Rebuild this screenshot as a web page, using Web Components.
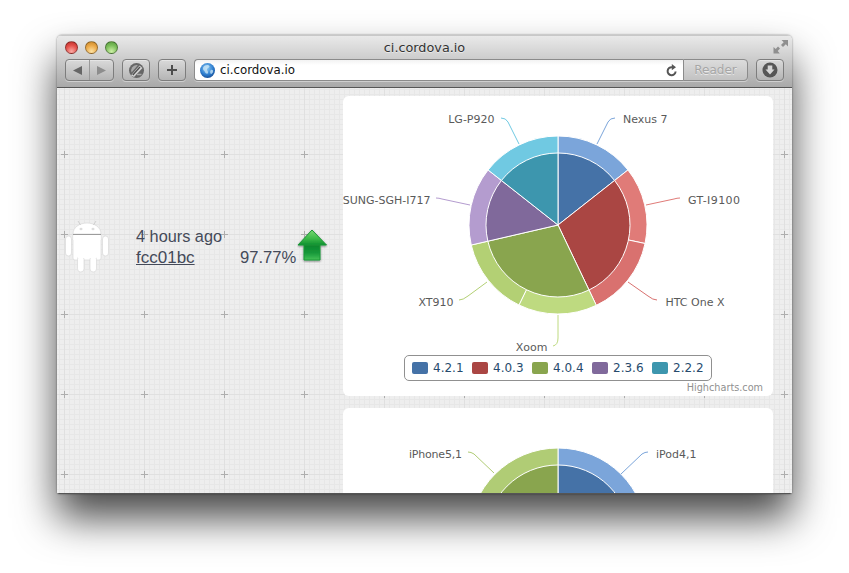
<!DOCTYPE html>
<html>
<head>
<meta charset="utf-8">
<title>ci.cordova.io</title>
<style>
  html, body { margin: 0; padding: 0; background: #fff; }
  body { width: 849px; height: 573px; overflow: hidden; }
</style>
</head>
<body>
<mac-window title-text="ci.cordova.io" url="ci.cordova.io">
  <grid-sheet>
    <build-row time="4 hours ago" commit="fcc01bc" percent="97.77%">
      <pie-chart chart="android"></pie-chart>
    </build-row>
    <build-row>
      <pie-chart chart="ios"></pie-chart>
    </build-row>
  </grid-sheet>
</mac-window>

<script>
const CHARTS = {
  android: {
    cy: 225,
    inner: [
      ['#4572A7', 0, 51.8], ['#AA4643', 51.8, 154.5], ['#89A54E', 154.5, 257],
      ['#80699B', 257, 308.2], ['#3D96AE', 308.2, 360],
    ],
    outer: [
      ['#7BA5DA', 0, 51.8], ['#E07B78', 51.8, 102], ['#D9716F', 102, 154.5], ['#BEDA80', 154.5, 206],
      ['#B3D074', 206, 257], ['#B49CCF', 257, 308.2], ['#70C9E2', 308.2, 360],
    ],
    labels: [
      ['Nexus 7', 623, 123, 'start', '#7BA5DA', 'M597 144L608 122Q610 118 615 118'],
      ['GT-I9100', 688, 204, 'start', '#E07B78', 'M646 205L674 199Q677 198 680 198', 52],
      ['HTC One X', 665.5, 306, 'start', '#D9716F', 'M628 282L648 296Q653 300 657 300'],
      ['Xoom', 547.5, 351, 'end', '#BEDA80', 'M558 315L558 338Q558 345 553 346'],
      ['XT910', 453.5, 306, 'end', '#B3D074', 'M487 282L468 296Q463 300 459 300'],
      ['SAMSUNG-SGH-I717', 430.5, 204, 'end', '#B49CCF', 'M470 205L442 199Q439 198 436 198'],
      ['LG-P920', 494.5, 123, 'end', '#70C9E2', 'M519 144L508 122Q506 118 501 118'],
    ],
    legend: [
      ['#4572A7', '4.2.1'], ['#AA4643', '4.0.3'], ['#89A54E', '4.0.4'], ['#80699B', '2.3.6'], ['#3D96AE', '2.2.2'],
    ],
  },
  ios: {
    cy: 537,
    inner: [['#4572A7', 0, 90], ['#89A54E', 270, 360]],
    outer: [['#7BA5DA', 0, 90], ['#B0CC75', 270, 360]],
    labels: [
      ['iPod4,1', 656, 458, 'start', '#7BA5DA', 'M621 474L642 454Q645 452 648 452'],
      ['iPhone5,1', 462, 458, 'end', '#B0CC75', 'M494 473L474 454Q471 452 468 452', 53],
    ],
    legend: [],
  },
};

function slicePath(cx, cy, r, from, to) {
  const rad = (deg) => (deg * Math.PI) / 180;
  const x1 = cx + r * Math.sin(rad(from));
  const y1 = cy - r * Math.cos(rad(from));
  const x2 = cx + r * Math.sin(rad(to));
  const y2 = cy - r * Math.cos(rad(to));
  const large = to - from > 180 ? 1 : 0;
  return `M${cx} ${cy}L${x1.toFixed(2)} ${y1.toFixed(2)}A${r} ${r} 0 ${large} 1 ${x2.toFixed(2)} ${y2.toFixed(2)}Z`;
}

class MacWindow extends HTMLElement {
  constructor() {
    super();
    this.attachShadow({ mode: 'open' });
  }

  connectedCallback() {
    this.shadowRoot.innerHTML = `
      <style>
        :host {
          display: block;
          width: 735px;
          height: 459px;
          margin: 35px 0 0 57px;
          border-radius: 5px 5px 2px 2px;
          box-shadow: 0 24px 40px rgba(0, 0, 0, 0.72), 0 0 2px rgba(0, 0, 0, 0.5);
        }
        .frame {
          height: 100%;
          display: flex;
          flex-direction: column;
          overflow: hidden;
          border-radius: inherit;
        }
        .content { flex: 1; min-height: 0; overflow: hidden; border-bottom: 1px solid #555; }
      </style>
      <div class="frame">
        <window-toolbar title-text="${this.getAttribute('title-text')}" url="${this.getAttribute('url')}"></window-toolbar>
        <div class="content"><slot></slot></div>
      </div>
    `;
  }
}

class WindowToolbar extends HTMLElement {
  constructor() {
    super();
    this.attachShadow({ mode: 'open' });
  }

  connectedCallback() {
    this.shadowRoot.innerHTML = `
      <style>
        :host {
          display: block;
          height: 53px;
          box-sizing: border-box;
          background: linear-gradient(#e9e9e9 0, #d6d6d6 30%, #a9a9a9 100%);
          border-top: 1px solid #c8c8c8;
          border-bottom: 1px solid #565656;
          font-family: "DejaVu Sans", sans-serif;
          color: #333;
        }
        .top { height: 23px; display: flex; align-items: center; position: relative; }
        .lights { display: flex; gap: 7px; padding-left: 8px; }
        .light {
          width: 13px;
          height: 13px;
          border-radius: 50%;
          box-sizing: border-box;
          border: 1px solid rgba(0, 0, 0, 0.35);
        }
        .red { background: radial-gradient(circle at 50% 85%, #fbaaa4 0, #e4504a 55%, #b92a25 100%); }
        .amber { background: radial-gradient(circle at 50% 85%, #fde2a2 0, #eba948 55%, #c58426 100%); }
        .green { background: radial-gradient(circle at 50% 85%, #cdf0a6 0, #7dbf5c 55%, #55983b 100%); }
        .title {
          position: absolute;
          left: 0;
          right: 0;
          top: 3px;
          text-align: center;
          font-size: 12.8px;
          line-height: 17px;
          text-shadow: 0 1px 0 rgba(255, 255, 255, 0.5);
        }
        .resize { position: absolute; right: 4px; top: 3px; }
        .tools { display: flex; align-items: stretch; height: 22px; padding: 0 8px; }
        .btn {
          box-sizing: border-box;
          height: 22px;
          border: 1px solid #7d7d7d;
          border-radius: 4px;
          background: linear-gradient(#d9d9d9, #b5b5b5);
          box-shadow: 0 1px 0 rgba(255, 255, 255, 0.4), inset 0 1px 0 rgba(255, 255, 255, 0.35);
          display: flex;
          align-items: center;
          justify-content: center;
        }
        .nav { width: 49px; margin-right: 8px; }
        .nav span { flex: 1; display: flex; justify-content: center; height: 100%; align-items: center; }
        .nav span + span { border-left: 1px solid #999; }
        .square { width: 28px; margin-right: 8px; }
        .address {
          width: 489px;
          box-sizing: border-box;
          border: 1px solid #8b8b8b;
          border-right: 0;
          border-radius: 4px 0 0 4px;
          background: linear-gradient(#f2f2f2 0, #fff 25%);
          box-shadow: 0 1px 0 rgba(255, 255, 255, 0.4);
          display: flex;
          align-items: center;
          padding: 0 5px 0 5px;
          font-size: 11.8px;
          color: #111;
        }
        .address .url { flex: 1; margin-left: 5px; }
        .reader {
          box-sizing: border-box;
          width: 65px;
          margin-right: 8px;
          border: 1px solid #8b8b8b;
          border-radius: 0 4px 4px 0;
          background: linear-gradient(#dcdcdc, #c2c2c2);
          box-shadow: 0 1px 0 rgba(255, 255, 255, 0.4);
          text-align: center;
          font-size: 12px;
          line-height: 20px;
          color: #a6a6a6;
          text-shadow: 0 1px 0 rgba(255, 255, 255, 0.6);
        }
        .square:last-child { margin-right: 0; }
      </style>
      <div class="top">
        <div class="lights">
          <div class="light red"></div><div class="light amber"></div><div class="light green"></div>
        </div>
        <div class="title">${this.getAttribute('title-text')}</div>
        <svg class="resize" width="15" height="15" viewBox="0 0 15 15">
          <path d="M8.5 1H15V7.5L12.8 5.3L10 8L8 6L10.7 3.2ZM0.5 8L2.7 10L5 7.5L7 9.5L4.7 12L6.8 14.5H0.5Z" fill="#8f8f8f"/>
        </svg>
      </div>
      <div class="tools">
        <div class="btn nav">
          <span><svg width="11" height="11" viewBox="0 0 11 11"><path d="M1 5.5L10 1V10Z" fill="#666"/></svg></span>
          <span><svg width="11" height="11" viewBox="0 0 11 11"><path d="M10 5.5L1 1V10Z" fill="#8d8d8d"/></svg></span>
        </div>
        <div class="btn square">
          <svg width="17" height="17" viewBox="0 0 17 17">
            <path d="M8.5 1A7.500 7.500 0 1 0 8.500 16A7.500 7.500 0 1 0 8.500 1Z" fill="#666"/>
            <path d="M8.500 3A5.500 5.500 0 0 0 3.500 10.500L9.800 3.200A5.500 5.500 0 0 0 8.500 3Z" fill="#a8a8a8"/>
            <path d="M3 13.500L11.500 3.500L14.500 6L6 15Z" fill="#d2d2d2"/>
            <path d="M4.800 13L12 5" stroke="#4d4d4d" stroke-width="1.300"/>
            <path d="M9 12.500H13.500" stroke="#a8a8a8" stroke-width="1.500"/>
          </svg>
        </div>
        <div class="btn square">
          <svg width="12" height="12" viewBox="0 0 12 12"><path d="M5 1H7V5H11V7H7V11H5V7H1V5H5Z" fill="#4d4d4d"/></svg>
        </div>
        <div class="address">
          <svg width="15" height="15" viewBox="0 0 15 15">
            <defs>
              <radialGradient id="globe" cx="45%" cy="35%" r="70%">
                <stop offset="0" stop-color="#8fcdf5"/><stop offset="0.6" stop-color="#2f7fd0"/><stop offset="1" stop-color="#13478f"/>
              </radialGradient>
            </defs>
            <circle cx="7.5" cy="7.5" r="7.5" fill="url(#globe)"/>
            <path d="M5 2.5C7 1.5 9.5 2 9.5 3.5C9.5 5 7.5 4.5 7 6C6.5 7.5 8.5 8 8 10C7.5 11.5 5.5 10.5 5 9C4.5 7.5 2.5 7 3 5C3.3 4 4 3 5 2.5ZM11 7C12.5 6.5 13.5 7.5 13 9C12.5 10.5 11 11.5 10.5 10.5C10 9.5 10 7.5 11 7Z" fill="#cfe8f7" opacity="0.75"/>
          </svg>
          <span class="url">${this.getAttribute('url')}</span>
          <svg width="12" height="13" viewBox="0 0 12 13">
            <path d="M9.6 7.5A4 4 0 1 1 6 3.2" fill="none" stroke="#555" stroke-width="2"/>
            <path d="M5.8 0L10 3.2L5.8 6.2Z" fill="#555"/>
          </svg>
        </div>
        <div class="reader">Reader</div>
        <div class="btn square">
          <svg width="16" height="16" viewBox="0 0 16 16">
            <circle cx="8" cy="8" r="7.5" fill="#565656"/>
            <path d="M5.7 3.5H10.3V7.5H12.5L8 12.5L3.5 7.5H5.7Z" fill="#d6d6d6"/>
          </svg>
        </div>
      </div>
    `;
  }
}

class GridSheet extends HTMLElement {
  constructor() {
    super();
    this.attachShadow({ mode: 'open' });
  }

  connectedCallback() {
    let minor = '';
    for (let i = 0; i < 16; i += 1) {
      minor += `M${2.5 + i * 5} 0V80M0 ${1.5 + i * 5}H80`;
    }
    const tile = `<svg xmlns='http://www.w3.org/2000/svg' width='80' height='80'>`
      + `<path d='${minor}' stroke='#e7e7e7' fill='none'/>`
      + `<path d='M7.5 0V80M0 66.5H80' stroke='#e0e0e0' fill='none'/>`
      + `<path d='M4 66.5H11M7.5 63V70' stroke='#adadad' fill='none'/></svg>`;
    const tileUrl = `url("data:image/svg+xml,${encodeURIComponent(tile)}")`;
    this.shadowRoot.innerHTML = `
      <style>
        :host {
          display: flex;
          flex-direction: column;
          gap: 12px;
          padding-top: 8px;
          background-color: #eeeeee;
          background-image: ${tileUrl};
        }
      </style>
      <slot></slot>
    `;
  }
}

class BuildRow extends HTMLElement {
  constructor() {
    super();
    this.attachShadow({ mode: 'open' });
  }

  connectedCallback() {
    const time = this.getAttribute('time');
    const info = !time ? '' : `
      <svg class="droid" width="45" height="54" viewBox="65 219 45 54">
        <g fill="#fff" stroke="#d4d4d4" stroke-width="0.6">
          <path d="M73 234C73 227 80 223 87 223C94 223 101 227 101 234Z"/>
          <path d="M73 235H101V258Q101 260 99 260H75Q73 260 73 258Z"/>
          <rect x="65.5" y="236" width="6" height="20" rx="3"/>
          <rect x="102.5" y="236" width="6" height="20" rx="3"/>
          <rect x="77.5" y="256" width="6.5" height="16" rx="3.2"/>
          <rect x="90" y="256" width="6.5" height="16" rx="3.2"/>
          <path d="M73.3 235H100.7V240H73.3Z" stroke="none"/>
          <path d="M78 255H84V258H78ZM90 255H96.500V258H90Z" stroke="none"/>
        </g>
        <path d="M78 221L80.5 225M96 221L93.5 225" stroke="#c8c8c8" stroke-width="0.8"/>
        <ellipse cx="81" cy="229" rx="1.5" ry="1.2" fill="#ddd"/>
        <ellipse cx="93" cy="229" rx="1.5" ry="1.2" fill="#ddd"/>
        <path d="M73 234.5H101" stroke="#9c9c9c" stroke-width="1"/>
      </svg>
      <div class="when">
        <div class="ago">${time}</div>
        <a href="#/commit">${this.getAttribute('commit')}</a>
      </div>
      <div class="pct">${this.getAttribute('percent')}<svg width="31" height="34" viewBox="297 229 31 34">
          <defs>
            <linearGradient id="head" x1="0" y1="0" x2="0" y2="1">
              <stop offset="0" stop-color="#7ad873"/><stop offset="0.55" stop-color="#3dbb4a"/><stop offset="1" stop-color="#0f9030"/>
            </linearGradient>
            <linearGradient id="shaft" x1="0" y1="0" x2="0" y2="1">
              <stop offset="0" stop-color="#0b8429"/><stop offset="0.55" stop-color="#15983a"/><stop offset="1" stop-color="#46c257"/>
            </linearGradient>
            <filter id="arrowShadow" x="-20%" y="-20%" width="140%" height="140%">
              <feDropShadow dx="0" dy="1" stdDeviation="0.8" flood-color="#000" flood-opacity="0.45"/>
            </filter>
          </defs>
          <g filter="url(#arrowShadow)" stroke="#1b9636" stroke-width="1" stroke-linejoin="round">
            <path d="M304 244H320V260H304Z" fill="url(#shaft)"/>
            <path d="M312 230L326.500 245H298Z" fill="url(#head)"/>
          </g>
        </svg></div>
    `;
    this.shadowRoot.innerHTML = `
      <style>
        :host {
          display: flex;
          font-family: "Liberation Sans", Arial, sans-serif;
          font-size: 16.6px;
          line-height: 21px;
          color: #444a59;
        }
        .info { width: 286px; flex: none; display: flex; align-items: center; box-sizing: border-box; padding-left: 8px; }
        .droid { flex: none; }
        .when { width: 104px; margin-left: 26px; flex: none; padding-top: 2px; }
        .ago { font-size: 16.3px; }
        .when a { color: inherit; font-size: 17px; }
        .pct { white-space: nowrap; padding-top: 5px; }
        .pct svg { vertical-align: 0; margin-left: 1px; }
      </style>
      <div class="info">${info}</div>
      <slot></slot>
    `;
  }
}

class PieChart extends HTMLElement {
  constructor() {
    super();
    this.attachShadow({ mode: 'open' });
  }

  connectedCallback() {
    const chart = CHARTS[this.getAttribute('chart')];
    const cx = 558;
    const top = chart.cy - 129;
    const outer = chart.outer.map(([color, from, to]) => (
      `<path d="${slicePath(cx, chart.cy, 89, from, to)}" fill="${color}" stroke="#fff"/>`)).join('');
    const inner = chart.inner.map(([color, from, to]) => (
      `<path d="${slicePath(cx, chart.cy, 72, from, to)}" fill="${color}" stroke="#fff"/>`)).join('');
    const labels = chart.labels.map(([text, x, y, anchor, color, line, length]) => `
      <path d="${line}" fill="none" stroke="${color}"/>
      <text x="${x}" y="${y}" text-anchor="${anchor}"${length ? ` textLength="${length}"` : ''}>${text}</text>`).join('');
    const legend = chart.legend.map(([color, text]) => `
      <div class="item"><i style="background:${color}"></i>${text}</div>`).join('');
    this.shadowRoot.innerHTML = `
      <style>
        :host {
          display: block;
          flex: none;
          width: 430px;
          height: 300px;
          background: #fff;
          border-radius: 6px;
          overflow: hidden;
          font-family: "DejaVu Sans", sans-serif;
        }
        svg { display: block; }
        text { font-size: 11px; fill: #5a5a5a; }
        .legend {
          box-sizing: border-box;
          width: 308px;
          height: 26px;
          margin: 0 0 0 61px;
          padding-left: 7px;
          display: flex;
          align-items: center;
          border: 1px solid #909090;
          border-radius: 5px;
          color: #274b6d;
          font-size: 12px;
        }
        .item { width: 60px; flex: none; display: flex; align-items: center; white-space: nowrap; }
        .item i { width: 16px; height: 12px; border-radius: 2px; margin-right: 5px; flex: none; }
        .credit { margin: 0 10px 0 0; text-align: right; font-size: 9.7px; line-height: 13px; color: #909090; }
      </style>
      <svg width="430" height="259" viewBox="343 ${top} 430 259">
        ${outer}${inner}${labels}
      </svg>
      ${legend ? `<div class="legend">${legend}</div><div class="credit">Highcharts.com</div>` : ''}
    `;
  }
}

customElements.define('mac-window', MacWindow);
customElements.define('window-toolbar', WindowToolbar);
customElements.define('grid-sheet', GridSheet);
customElements.define('build-row', BuildRow);
customElements.define('pie-chart', PieChart);
</script>
</body>
</html>
